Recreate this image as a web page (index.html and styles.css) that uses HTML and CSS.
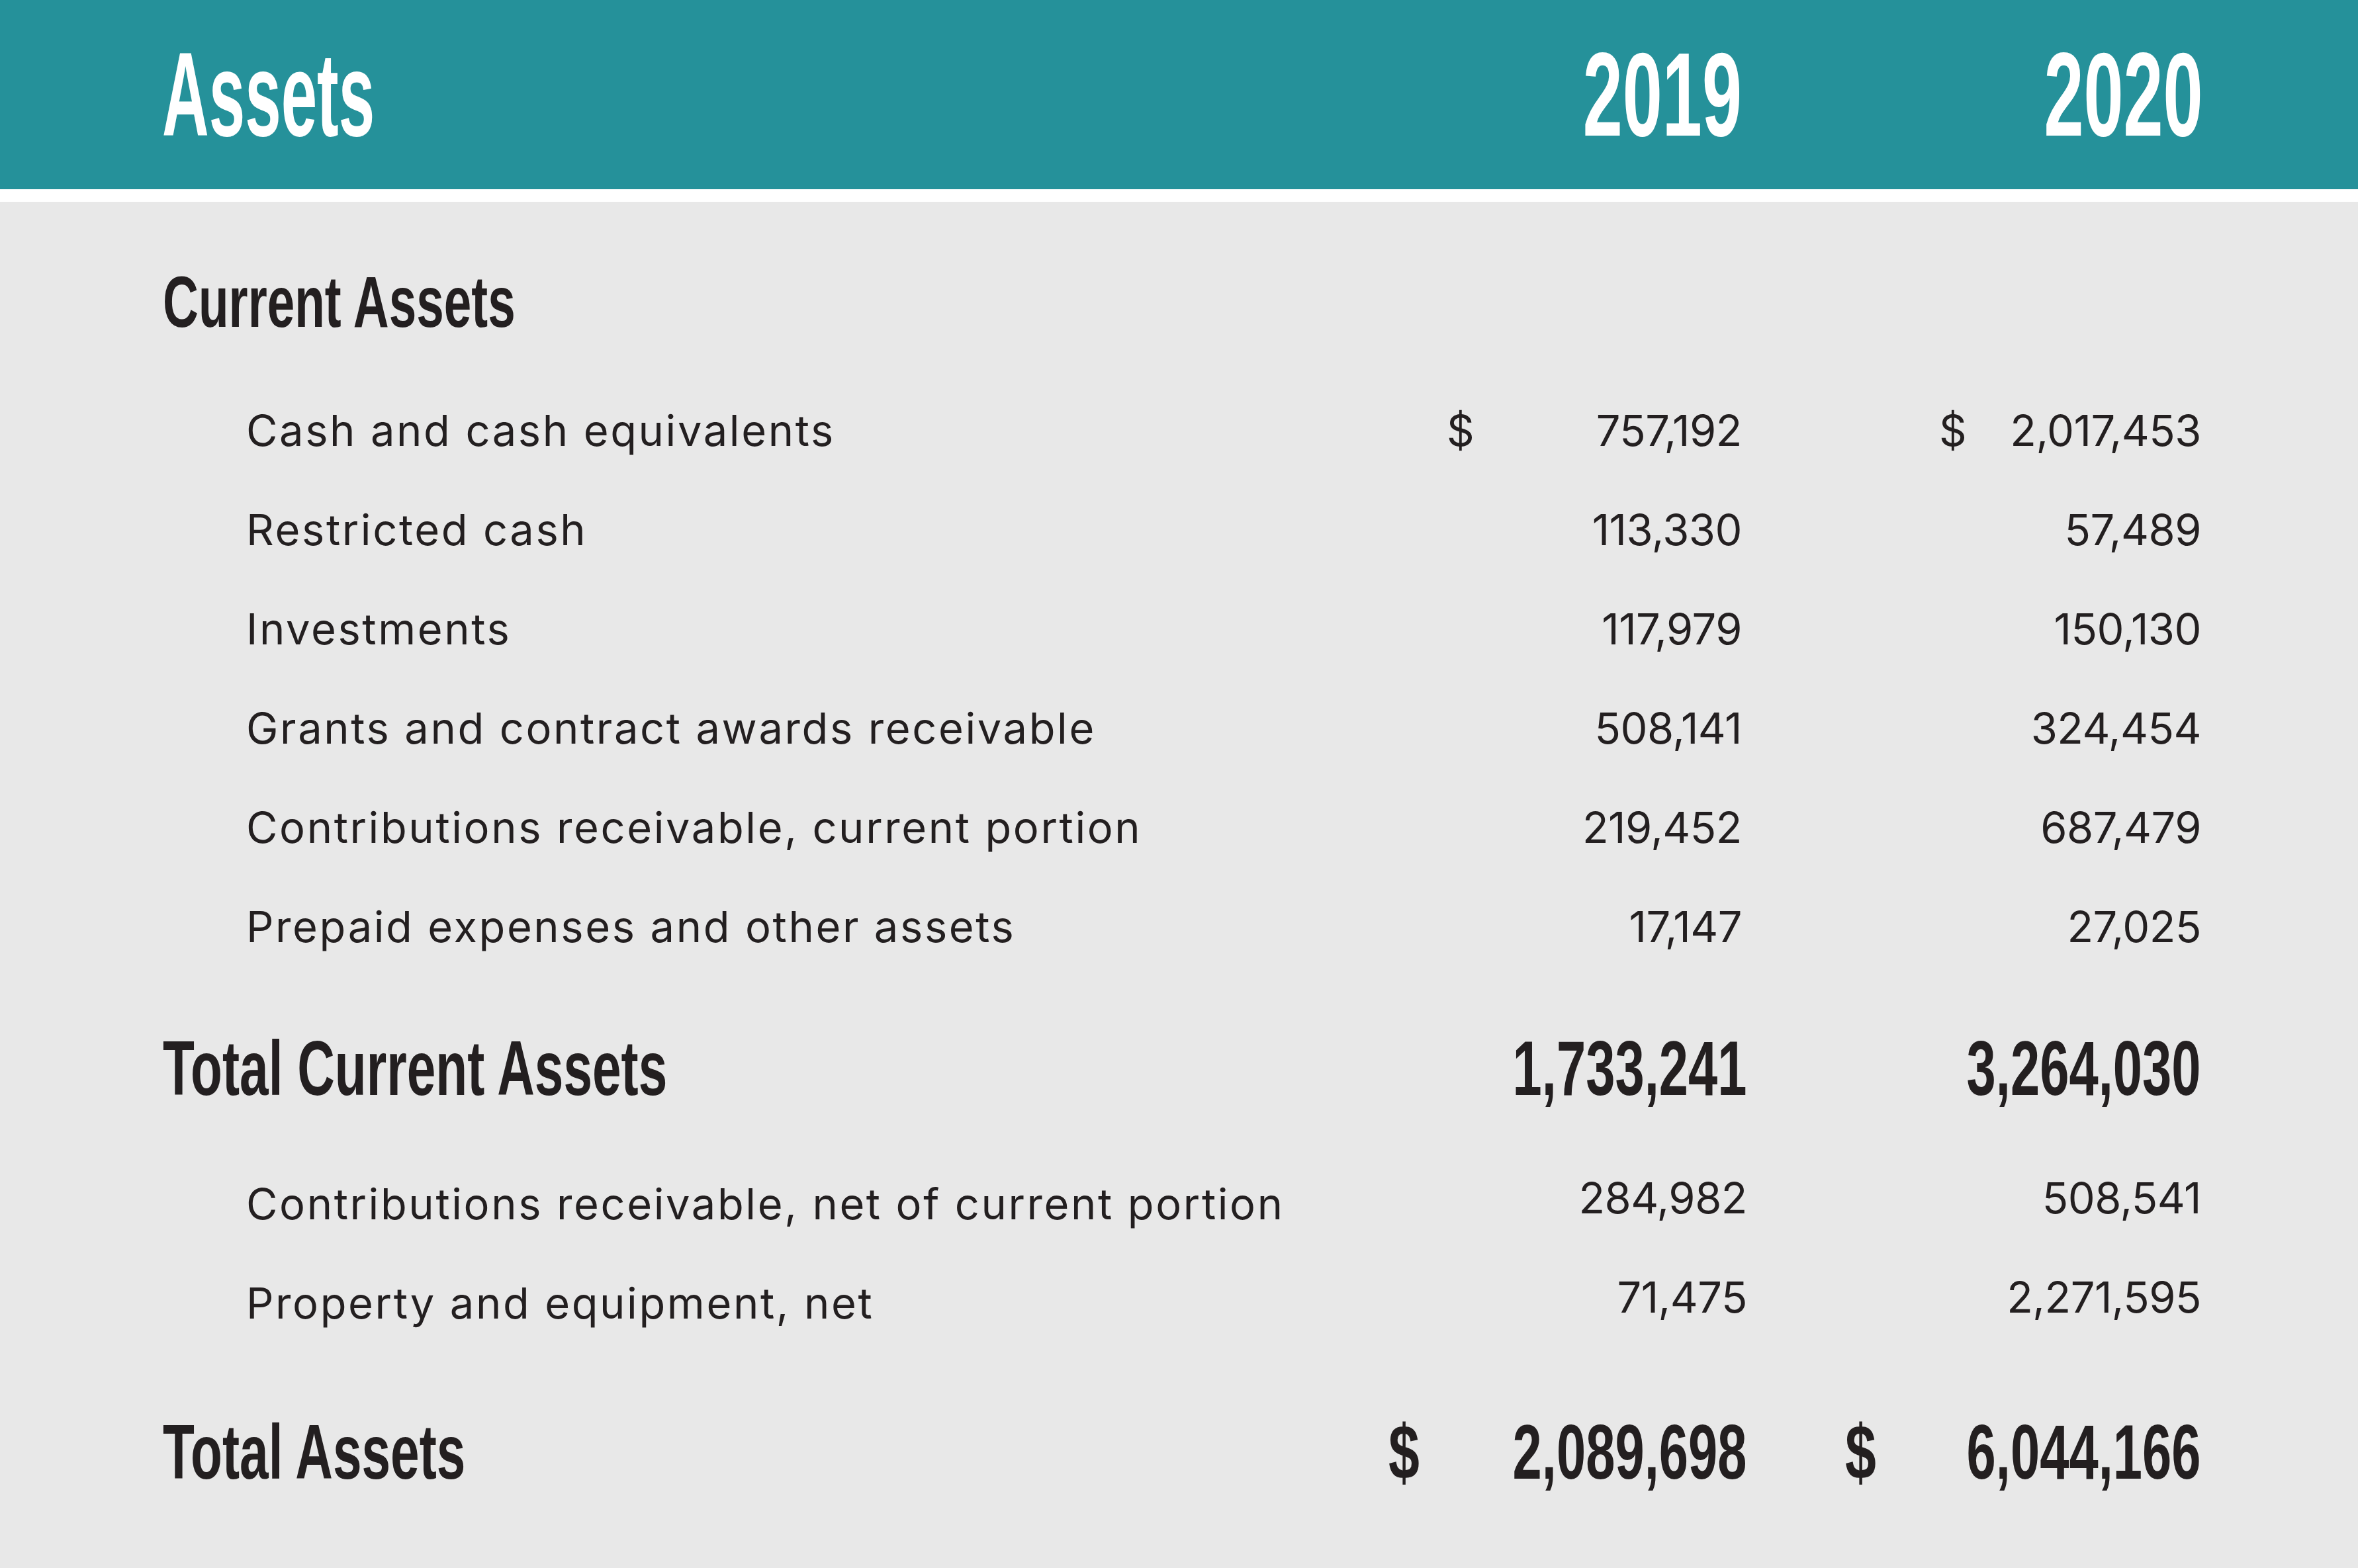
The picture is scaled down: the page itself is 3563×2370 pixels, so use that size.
FILE: index.html
```html
<!DOCTYPE html>
<html lang="en">
<head>
<meta charset="utf-8">
<title>Assets</title>
<link rel="stylesheet" href="styles.css">
</head>
<body>
<header class="banner">
  <div class="banner-row">
    <div class="hand title">Assets</div>
    <div class="hand year">2019</div>
    <div class="hand year">2020</div>
  </div>
</header>
<main class="sheet">
  <h2 class="hand section">Current Assets</h2>
  <div class="lines">
    <div class="row">
      <div class="label">Cash and cash equivalents</div>
      <div class="val"><span class="cur">$</span><span class="num">757,192</span></div>
      <div class="val"><span class="cur">$</span><span class="num">2,017,453</span></div>
    </div>
    <div class="row">
      <div class="label">Restricted cash</div>
      <div class="val"><span class="num">113,330</span></div>
      <div class="val"><span class="num">57,489</span></div>
    </div>
    <div class="row">
      <div class="label">Investments</div>
      <div class="val"><span class="num">117,979</span></div>
      <div class="val"><span class="num">150,130</span></div>
    </div>
    <div class="row">
      <div class="label">Grants and contract awards receivable</div>
      <div class="val"><span class="num">508,141</span></div>
      <div class="val"><span class="num">324,454</span></div>
    </div>
    <div class="row">
      <div class="label">Contributions receivable, current portion</div>
      <div class="val"><span class="num">219,452</span></div>
      <div class="val"><span class="num">687,479</span></div>
    </div>
    <div class="row">
      <div class="label">Prepaid expenses and other assets</div>
      <div class="val"><span class="num">17,147</span></div>
      <div class="val"><span class="num">27,025</span></div>
    </div>
  </div>

  <div class="total total-current">
    <div class="hand tlabel">Total Current Assets</div>
    <div class="tval"><span class="hand tnum">1,733,241</span></div>
    <div class="tval"><span class="hand tnum">3,264,030</span></div>
  </div>

  <div class="lines lines-lower">
    <div class="row raised">
      <div class="label">Contributions receivable, net of current portion</div>
      <div class="val"><span class="num">284,982</span></div>
      <div class="val"><span class="num">508,541</span></div>
    </div>
    <div class="row raised">
      <div class="label">Property and equipment, net</div>
      <div class="val"><span class="num">71,475</span></div>
      <div class="val"><span class="num">2,271,595</span></div>
    </div>
  </div>

  <div class="total total-all">
    <div class="hand tlabel">Total Assets</div>
    <div class="tval"><span class="hand tcur">$</span><span class="hand tnum">2,089,698</span></div>
    <div class="tval"><span class="hand tcur">$</span><span class="hand tnum">6,044,166</span></div>
  </div>
</main>
</body>
</html>
```

FILE: styles.css
```css
html, body {
  margin: 0;
  padding: 0;
}

body {
  background: #e8e8e8;
  color: #231f20;
  font-family: Inter, "Noto Sans", sans-serif;
  min-height: 100vh;
}

.hand {
  font-family: "Liberation Sans", Arial, sans-serif;
  font-weight: 700;
}

/* ---------- banner ---------- */
.banner {
  background: #25919a;
  height: 286px;
  border-bottom: 19px solid #ffffff;
}

.banner-row {
  display: grid;
  grid-template-columns: minmax(0, 1fr) 446px 396px;
  column-gap: 298px;
  padding: 0 237px 0 245px;
  height: 286px;
  line-height: 286px;
  color: #ffffff;
  font-size: 180px;
  white-space: nowrap;
}

.title {
  transform: scaleX(0.544);
  transform-origin: left center;
}

.year {
  text-align: right;
  transform: scaleX(0.6);
  transform-origin: right center;
}

/* ---------- sheet ---------- */
.sheet {
  padding: 76px 237px 100px 246px;
}

.section {
  margin: 0;
  font-size: 110px;
  line-height: 150px;
  white-space: nowrap;
  transform: scaleX(0.679);
  transform-origin: left center;
}

.lines {
  margin-top: 45px;
}

.lines-lower {
  margin-top: 55px;
}

.row {
  display: grid;
  grid-template-columns: minmax(0, 1fr) 446px 396px;
  column-gap: 298px;
  height: 150px;
  line-height: 150px;
  font-size: 65px;
  white-space: nowrap;
}

.label {
  padding-left: 126px;
  letter-spacing: 2.6px;
}

.val {
  display: flex;
  justify-content: space-between;
}

.num {
  margin-left: auto;
  letter-spacing: -0.5px;
}

.raised .val {
  line-height: 132px;
}

.raised .val:nth-child(2) {
  margin-right: -8px;
}

/* ---------- totals ---------- */
.total {
  display: grid;
  grid-template-columns: minmax(0, 1fr) 542px 538px;
  column-gap: 148px;
  height: 150px;
  line-height: 150px;
  font-size: 117px;
  white-space: nowrap;
}

.total-current {
  margin-top: 64px;
}

.total-all {
  margin-top: 75px;
}

.tlabel {
  transform: scaleX(0.67);
  transform-origin: left center;
}

.tval {
  display: grid;
  grid-template-columns: 100%;
}

.tcur,
.tnum {
  grid-area: 1 / 1;
  display: inline-block;
}

.tcur {
  justify-self: start;
  transform: scaleX(0.72);
  transform-origin: left center;
}

.tnum {
  justify-self: end;
  transform: scaleX(0.68);
  transform-origin: right center;
}
```
